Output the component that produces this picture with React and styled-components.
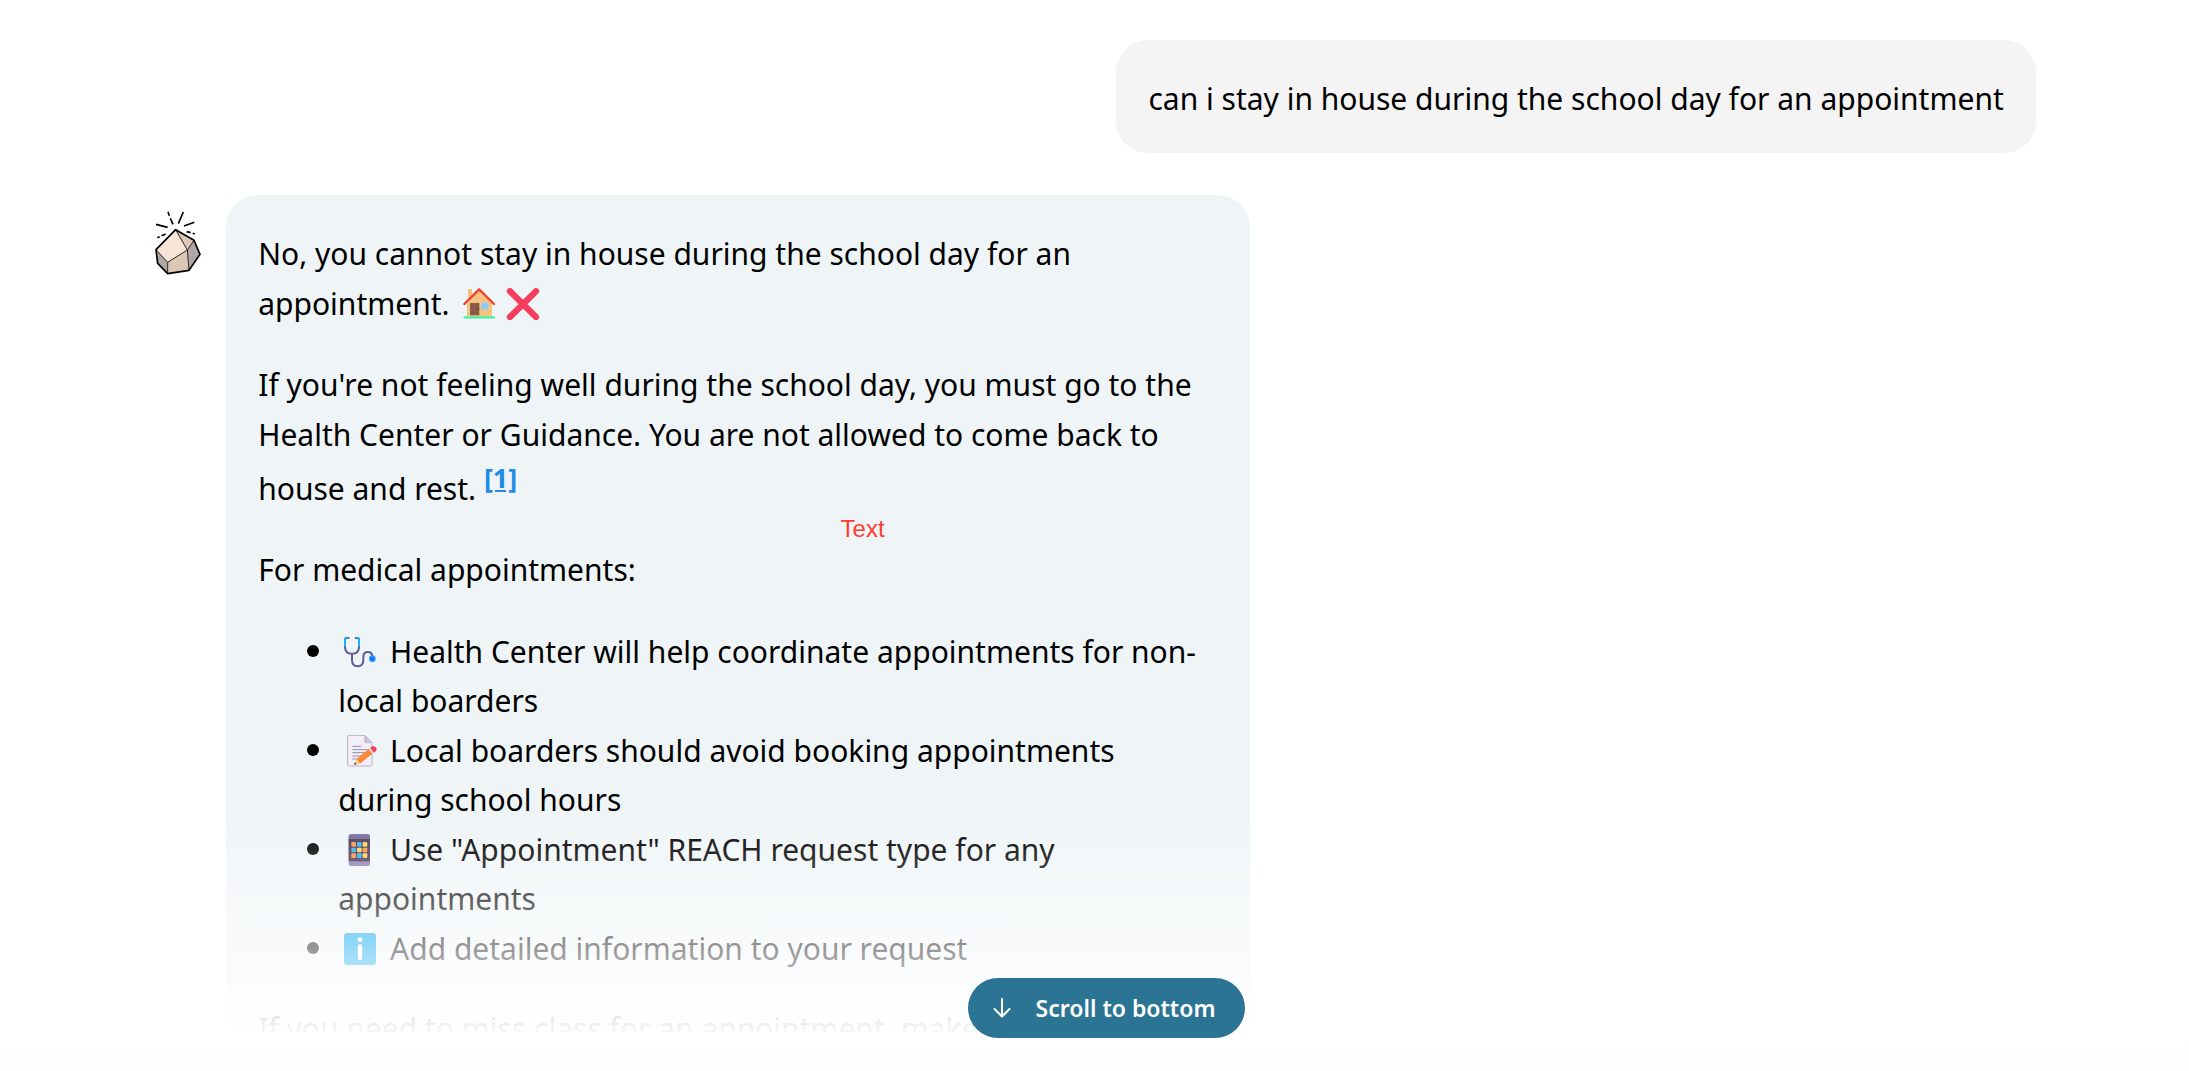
import React from 'react'
import styled, { createGlobalStyle } from 'styled-components';

const House = () => (
  <Emoji viewBox="48 54 132 96" role="img" aria-label="house">
    <path d="M81 57h12v26H81z" fill="#f4c383" />
    <path d="M114 60 L153 97 V139 H78 V97 Z" fill="#f4c383" />
    <rect x="87" y="99" width="28" height="37" rx="1" fill="#8b5a48" />
    <circle cx="110" cy="117" r="2" fill="#4a2b29" />
    <rect x="121" y="98" width="21" height="20" rx="1" fill="#8bcbfb" />
    <path d="M70 102 L114.500 58 L159 102" fill="none" stroke="#f4402f" strokeWidth="7" strokeLinecap="round" strokeLinejoin="round" />
    <path d="M71 142h87" stroke="#43ee96" strokeWidth="7" strokeLinecap="round" />
  </Emoji>
)

const Cross = () => (
  <Emoji viewBox="180 54 132 96" role="img" aria-label="cross mark">
    <path d="M207 64 L285 141 M285 64 L207 141" stroke="#f73d5d" strokeWidth="19" strokeLinecap="round" />
  </Emoji>
)

const Stethoscope = () => (
  <Emoji viewBox="54 48 132 96" role="img" aria-label="stethoscope">
    <g fill="none" strokeWidth="6" strokeLinecap="round">
      <path d="M86 54 H80 Q75 54 75 60 V80 Q75 101 96 101 Q117 101 117 80 V60 Q117 54 112 54 H107" stroke="#62589b" />
      <path d="M96 101 V120 Q96 139 113 139 Q130 139 130 120 V110 Q130 96 144 96 Q157 96 157 110" stroke="#62589b" />
      <path d="M75 77 V60 Q75 54 80 54 M117 77 V60 Q117 54 112 54" stroke="#19b0f5" />
    </g>
    <circle cx="157" cy="116" r="10" fill="#19a4f7" />
    <circle cx="157" cy="116" r="6" fill="#2b61ff" />
  </Emoji>
)

const Memo = () => (
  <Emoji viewBox="54 45 132 96" role="img" aria-label="memo">
    <path d="M87 46 H134 L156 68 V134 Q156 138 152 138 H87 Q83 138 83 134 V50 Q83 46 87 46 Z" fill="#f3eff9" stroke="#b8b0c6" strokeWidth="3" />
    <path d="M134 46 L156 68 H138 Q134 68 134 64 Z" fill="#cdc6d8" stroke="#b8b0c6" strokeWidth="2" />
    <path d="M97 79h27M97 89h46M97 98h46M97 108h30M97 117h20" stroke="#948ba8" strokeWidth="3" />
    <path d="M109 117 L146 87 L157 101 L120 131 Z" fill="#ff8838" />
    <path d="M109 117 L120 131 L103 134 Z" fill="#fbd08c" />
    <path d="M105 127 L110 133 L102 134 Z" fill="#4b3b45" />
    <path d="M146 87 L151 83 L162 97 L157 101 Z" fill="#d5cfdc" />
    <path d="M151 83 Q160 75 167 82 Q175 90 162 98 Z" fill="#f73d5d" />
  </Emoji>
)

const APP_TILES = ['#ff8f4a', '#2fb0f0', '#ffd25a', '#2fb0f0', '#ffd25a', '#ff8f4a', '#ff8f4a', '#2fb0f0', '#ffd25a'];

const Phone = () => (
  <Emoji viewBox="114 44 132 96" role="img" aria-label="mobile phone">
    <rect x="146" y="45" width="64" height="95" rx="7" fill="#8b80b6" />
    <rect x="146" y="45" width="64" height="30" rx="7" fill="#7469a0" />
    <rect x="146" y="59" width="64" height="67" fill="#4b3950" />
    {APP_TILES.map((color, index) => (
      <rect key={index} x={154 + (index % 3) * 17} y={68 + Math.floor(index / 3) * 17} width="14" height="14" rx="3" fill={color} />
    ))}
  </Emoji>
)

const Info = () => (
  <Emoji viewBox="114 342 132 96" role="img" aria-label="information">
    <rect x="132" y="342" width="96" height="96" rx="9" fill="#00a6ed" />
    <circle cx="180" cy="362" r="7" fill="#fff" />
    <path d="M180 382 V417" stroke="#fff" strokeWidth="13" strokeLinecap="round" />
  </Emoji>
)

const Rock = () => (
  <Avatar viewBox="69 51 153 210" role="img" aria-label="assistant">
    <path d="M137 119 L78 179 L113 217 L172 180 Z" fill="#f7e6d6" />
    <path d="M137 119 L192 151 L172 180 Z" fill="#dcc7b5" />
    <path d="M192 151 L210 193 L177 241 L172 180 Z" fill="#aea7a3" />
    <path d="M172 180 L177 241 L113 251 L113 217 Z" fill="#dac7b4" />
    <path d="M78 179 L113 217 L113 251 L83 220 Z" fill="#aea7a3" />
    <path d="M137 119 L172 180 L192 151 M172 180 L177 241 M172 180 L113 217 V251 M113 217 L78 179" fill="none" stroke="#2a2624" strokeWidth="3" />
    <path d="M137 119 L192 151 L210 193 L177 241 L113 251 L83 220 L78 179 Z" fill="none" stroke="#000" strokeWidth="5" strokeLinejoin="round" />
    <path d="M78 103 L113 112 M145 101 L160 66 M162 108 L193 97" stroke="#000" strokeWidth="5" />
    <path d="M114 65 L118 77 M121 85 L129 103 M82 143 L89 140 M95 137 L107 132 M170 125 L182 128 M188 130 L194 132" stroke="#000" strokeWidth="5" />
  </Avatar>
)

const ArrowDown = () => (
  <ArrowIcon viewBox="0 0 18 20" aria-hidden="true">
    <path d="M9 1 V18 M1.500 11 L9 18.500 L16.500 11" />
  </ArrowIcon>
)

export default function App() {
  return (
    <>
      <GlobalStyle />
      <Chat>
        <Messages>
          <UserBubble>
            <Paragraph>can i stay in house during the school day for an appointment</Paragraph>
          </UserBubble>
          <AssistantRow>
            <Rock />
            <AssistantBubble>
              <Paragraph>
                No, you cannot stay in house during the school day for an<br />
                appointment. <House /><Cross />
              </Paragraph>
              <Paragraph>
                If you're not feeling well during the school day, you must go to the<br />
                Health Center or Guidance. You are not allowed to come back to<br />
                house and rest. <Citation><a href="#source-1">[1]</a></Citation>
              </Paragraph>
              <Annotation>Text</Annotation>
              <Paragraph>For medical appointments:</Paragraph>
              <List>
                <li><Stethoscope /> Health Center will help coordinate appointments for non-<br />local boarders</li>
                <li><Memo /> Local boarders should avoid booking appointments<br />during school hours</li>
                <li><Phone /> Use "Appointment" REACH request type for any<br />appointments</li>
                <li><Info /> Add detailed information to your request</li>
              </List>
              <Paragraph>If you need to miss class for an appointment, make</Paragraph>
            </AssistantBubble>
          </AssistantRow>
          <Fade />
        </Messages>
        <Footer>
          <ScrollButton type="button">
            <ArrowDown />
            Scroll to bottom
          </ScrollButton>
        </Footer>
      </Chat>
    </>
  )
}

const GlobalStyle = createGlobalStyle`
  * {
    box-sizing: border-box;
  }
  body {
    margin: 0;
    background: #fff;
    color: #000;
    font-family: "Segoe UI", "Noto Sans", "Open Sans", sans-serif;
  }
`
const Chat = styled.main`
  display: flex;
  flex-direction: column;
  height: 100vh;
  overflow: hidden;
  font-size: 30px;
  line-height: 50px;
`
const Messages = styled.section`
  position: relative;
  flex: 1;
  display: flex;
  flex-direction: column;
  gap: 42px;
  min-height: 0;
  padding: 40px 7% 0;
  overflow: hidden;
`
const UserBubble = styled.div`
  align-self: flex-end;
  flex-shrink: 0;
  padding: 34px 32px 29px;
  border-radius: 32px;
  background: #f4f4f4;
`
const AssistantRow = styled.div`
  display: flex;
  align-items: flex-start;
  gap: 22px;
`
const Avatar = styled.svg`
  flex-shrink: 0;
  width: 51px;
  height: 70px;
  margin-top: 12px;
`
const AssistantBubble = styled.div`
  position: relative;
  display: flex;
  flex-direction: column;
  gap: 31px;
  width: 1024px;
  padding: 34px 32px 29px;
  border-radius: 32px;
  background: #eff5f7;
`
const Paragraph = styled.p`
  margin: 0;
`
const List = styled.ul`
  margin: 0;
  padding: 0 0 0 80px;
  line-height: 49px;
  li::marker {
    font-size: 34px;
  }
`
const Emoji = styled.svg`
  width: 44px;
  height: 32px;
  vertical-align: -5px;
`
const Citation = styled.sup`
  font-size: 27px;
  font-weight: 700;
  line-height: 36px;
  vertical-align: 12px;
  a {
    color: #228be6;
  }
`
// note pinned on top of the answer
const Annotation = styled.span`
  position: absolute;
  top: 320px;
  left: 60%;
  color: #ff3b30;
  font-family: "Liberation Sans", Arial, sans-serif;
  font-size: 24px;
  line-height: 28px;
`
const Fade = styled.div`
  position: absolute;
  right: 0;
  bottom: 0;
  left: 0;
  height: 216px;
  background: linear-gradient(to bottom, rgba(255, 255, 255, 0), rgba(255, 255, 255, 0.97));
  pointer-events: none;
`
const Footer = styled.footer`
  position: relative;
  display: flex;
  justify-content: center;
  height: 39px;
  padding-left: 24px;
  background: linear-gradient(to bottom, #fff, #fdfdfd);
`
const ScrollButton = styled.button`
  position: absolute;
  bottom: 33px;
  display: flex;
  align-items: center;
  gap: 25px;
  height: 60px;
  padding: 0 30px 0 25px;
  border: none;
  border-radius: 30px;
  background: #2b7494;
  color: #fff;
  font-family: inherit;
  font-size: 23px;
  font-weight: 600;
  cursor: pointer;
`
const ArrowIcon = styled.svg`
  width: 18px;
  height: 20px;
  fill: none;
  stroke: currentColor;
  stroke-width: 2;
  stroke-linecap: round;
  stroke-linejoin: round;
`
